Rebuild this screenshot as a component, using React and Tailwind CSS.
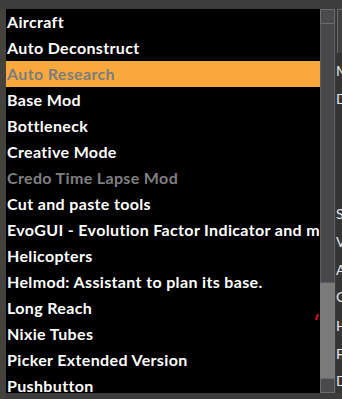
const mods = [
  { name: "Aircraft" },
  { name: "Auto Deconstruct" },
  { name: "Auto Research", selected: true },
  { name: "Base Mod" },
  { name: "Bottleneck" },
  { name: "Creative Mode" },
  { name: "Credo Time Lapse Mod", disabled: true },
  { name: "Cut and paste tools" },
  { name: "EvoGUI - Evolution Factor Indicator and mini-map" },
  { name: "Helicopters" },
  { name: "Helmod: Assistant to plan its base." },
  { name: "Long Reach" },
  { name: "Nixie Tubes" },
  { name: "Picker Extended Version" },
  { name: "Pushbutton" },
];

const sideLetters = [
  { l: "M", top: "mt-[54px]" },
  { l: "D", top: "mt-[12px]" },
  { l: "S", top: "mt-[99px]" },
  { l: "V", top: "mt-[12px]" },
  { l: "A", top: "mt-[12px]" },
  { l: "C", top: "mt-[11px]" },
  { l: "H", top: "mt-[13px]" },
  { l: "F", top: "mt-[12px]" },
  { l: "D", top: "mt-[11px]" },
];

const ModRow = ({ mod }) => {
  let cls = "text-white";
  if (mod.selected) cls = "bg-[#f9a93b] text-[#7d7d7d]";
  else if (mod.disabled) cls = "text-[#7f7f7f]";
  return (
    <div
      className={`h-[26px] shrink-0 flex items-center pl-[1px] whitespace-nowrap text-[16px] font-bold tracking-[0.35px] ${cls}`}
    >
      {mod.name}
    </div>
  );
};

export default function App() {
  return (
    <div
      className="w-[342px] h-[399px] overflow-hidden bg-[#3c3c3c] flex pt-[9px]"
      style={{ fontFamily: '"Lato", "Open Sans", sans-serif' }}
    >
      {/* left strip */}
      <div className="w-[6px] h-full bg-[#45423c] shrink-0" />

      {/* mod list */}
      <div className="relative w-[314px] h-[384px] bg-black overflow-hidden shrink-0 flex flex-col">
        {mods.map((m) => (
          <ModRow key={m.name} mod={m} />
        ))}
        <div className="absolute left-[310px] top-[305px] w-[2px] h-[6px] bg-[#e01010] rotate-[20deg]" />
      </div>

      {/* scrollbar */}
      <div className="w-[15px] h-[384px] shrink-0 flex flex-col bg-[#7a7a7a]">
        <div className="h-[15px] border border-[#6c6c70] bg-[#4a494e]" />
        <div className="h-[259px] border-x border-b border-[#5e5e62] bg-[#48474c]" />
        <div className="flex-1" />
        <div className="h-[15px] border border-[#6c6c70] bg-[#4a494e]" />
      </div>

      {/* right panel, cut off */}
      <div className="flex-1 h-[384px] bg-[#353535] ml-[1px] relative overflow-hidden">
        <div className="absolute left-[1px] top-0 w-[8px] h-[44px] border-l border-t border-[#6a6a6a] bg-[#3f3f3f]" />
        <div className="flex flex-col text-[14px] leading-[16px] text-[#e6e6e6]">
          {sideLetters.map((s, i) => (
            <span key={i} className={s.top}>
              {s.l}
            </span>
          ))}
        </div>
      </div>
    </div>
  );
}
